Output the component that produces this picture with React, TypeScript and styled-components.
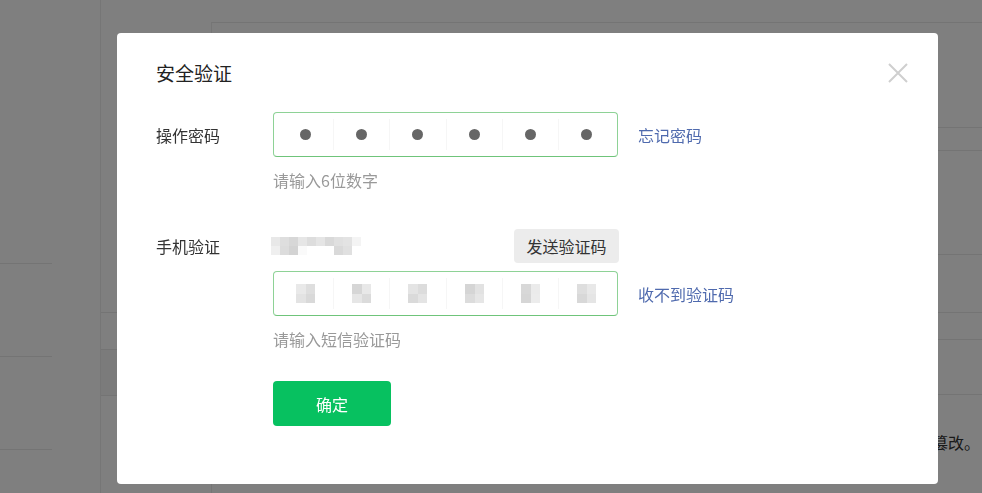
import React from "react";
import styled, { createGlobalStyle } from "styled-components";

const GlobalStyle = createGlobalStyle`
  html, body {
    margin: 0;
    padding: 0;
    height: 100%;
    overflow: hidden;
  }
  body {
    font-family: "Noto Sans CJK SC", "Noto Sans", "Liberation Sans", sans-serif;
    background: #fff;
  }
`;

const CODE_MOSAIC = [
  ["#e9e9e9", "#dedede", "#e3e3e3", "#d9d9d9"],
  ["#d6d6d6", "#e8e8e8", "#e6e6e6", "#dbdbdb"],
  ["#e4e4e4", "#dcdcdc", "#dadada", "#e4e4e4"],
  ["#d5d5d5", "#e2e2e2", "#dcdcdc", "#e6e6e6"],
  ["#d8d8d8", "#ebebeb", "#d6d6d6", "#ececec"],
  ["#dedede", "#e8e8e8", "#d8d8d8", "#e5e5e5"],
];

const PHONE_MOSAIC = [
  ["#e8e8e8", "#dedede", "#d7d7d7", "#e6e6e6", "#dddddd", "#e5e5e5", "#d9d9d9", "#e0e0e0", "#e3e3e3", "#f4f4f4"],
  ["#efefef", "#dcdcdc", "#d3d3d3", "#fafafa", "#ffffff", "#ffffff", "#ffffff", "#d9d9d9", "#e0e0e0", "#ffffff"],
];

const Page = styled.div`
  display: flex;
  height: 100vh;
  background: #fff;
`;

const SideNav = styled.div`
  width: 52px;
  padding-top: 171px;
  display: flex;
  flex-direction: column;
`;

const NavItem = styled.div`
  height: 92px;
  border-bottom: 1px solid #e8e8e8;
`;

const Gutter = styled.div`
  width: 48px;
`;

const SubColumn = styled.div`
  width: 110px;
  border-left: 1px solid #ececec;
  padding-top: 312px;
`;

const SubRow = styled.div<{ $h: number; $shade?: boolean }>`
  height: ${(p) => p.$h}px;
  border-top: 1px solid #e8e8e8;
  background: ${(p) => (p.$shade ? "#f6f6f6" : "transparent")};
`;

const Main = styled.div`
  flex: 1;
  margin-top: 22px;
  border-top: 1px solid #e8e8e8;
  border-left: 1px solid #ececec;
`;

const TableRow = styled.div<{ $h: number }>`
  height: ${(p) => p.$h}px;
  border-bottom: 1px solid #e8e8e8;
`;

const Notice = styled.div`
  margin-top: 36px;
  padding-right: 2px;
  text-align: right;
  font-size: 16px;
  line-height: 22px;
  color: #333;
`;

const Overlay = styled.div`
  position: fixed;
  inset: 0;
  background: rgba(0, 0, 0, 0.5);
  display: flex;
  align-items: flex-start;
  padding: 33px 0 0 117px;
`;

const Dialog = styled.div`
  width: 821px;
  height: 451px;
  box-sizing: border-box;
  background: #fff;
  border-radius: 4px;
  display: flex;
  flex-direction: column;
`;

const Header = styled.div`
  height: 79px;
  padding: 0 30px 0 39px;
  display: flex;
  align-items: center;
  justify-content: space-between;
`;

const Title = styled.h2`
  margin: 0;
  font-size: 19px;
  font-weight: 400;
  color: #222;
  line-height: 26px;
`;

const CloseButton = styled.button`
  border: 0;
  background: none;
  padding: 0;
  width: 20px;
  height: 20px;
  cursor: pointer;
  display: flex;
`;

const Body = styled.div`
  padding-left: 39px;
  display: flex;
  flex-direction: column;
`;

const FieldRow = styled.div<{ $top?: number }>`
  display: flex;
  align-items: center;
  margin-top: ${(p) => p.$top || 0}px;
`;

const Label = styled.div`
  width: 117px;
  font-size: 16px;
  line-height: 22px;
  color: #333;
`;

const CodeBox = styled.div`
  width: 345px;
  height: 45px;
  box-sizing: border-box;
  padding: 0 3px 0 4px;
  border: 1px solid #8ed296;
  border-bottom-color: #6fc47a;
  border-radius: 4px;
  display: flex;
  align-items: center;
`;

const Cell = styled.div<{ $faint?: boolean }>`
  flex: 1;
  height: 31px;
  display: flex;
  align-items: center;
  justify-content: center;
  & + & {
    border-left: 1px solid ${(p) => (p.$faint ? "#f6f6f6" : "#e8e8e8")};
  }
`;

const Dot = styled.span`
  width: 11px;
  height: 11px;
  border-radius: 50%;
  background: #666;
`;

const Link = styled.a`
  margin-left: 20px;
  font-size: 16px;
  line-height: 22px;
  color: #4f6aae;
  text-decoration: none;
  cursor: pointer;
`;

const Hint = styled.div`
  margin: 12px 0 0 117px;
  font-size: 16px;
  line-height: 22px;
  color: #999;
`;

const PhoneLine = styled.div`
  width: 346px;
  display: flex;
  align-items: center;
  justify-content: space-between;
`;

const SendButton = styled.button`
  width: 105px;
  height: 34px;
  border: 0;
  border-radius: 4px;
  background: #ececec;
  color: #333;
  font-family: inherit;
  font-size: 16px;
  padding: 0;
  cursor: pointer;
`;

const Mosaic = styled.svg`
  display: block;
  flex-shrink: 0;
`;

const ConfirmButton = styled.button`
  margin: 31px 0 0 117px;
  width: 118px;
  height: 45px;
  border: 0;
  border-radius: 4px;
  background: #07c160;
  color: #fff;
  font-family: inherit;
  font-size: 16px;
  cursor: pointer;
`;

const PhoneBlur = () => (
  <Mosaic width="90" height="18" viewBox="0 0 90 18" style={{ marginLeft: -2 }}>
    {PHONE_MOSAIC.map((row, r) =>
      row.map((c, i) => <rect key={`${r}-${i}`} x={i * 9} y={r * 9} width="9" height="9" fill={c} />)
    )}
  </Mosaic>
);

const CodeBlur = ({ colors }: { colors: string[] }) => (
  <Mosaic width="19" height="19" viewBox="0 0 19 19">
    <rect x="0" y="0" width="10" height="10" fill={colors[0]} />
    <rect x="10" y="0" width="9" height="10" fill={colors[1]} />
    <rect x="0" y="10" width="10" height="9" fill={colors[2]} />
    <rect x="10" y="10" width="9" height="9" fill={colors[3]} />
  </Mosaic>
);

export default function App() {
  return (
    <>
      <GlobalStyle />
      <Page>
        <SideNav>
          <NavItem />
          <NavItem />
          <NavItem />
        </SideNav>
        <Gutter />
        <SubColumn>
          <SubRow $h={36} />
          <SubRow $h={45} $shade />
          <SubRow $h={60} />
        </SubColumn>
        <Main>
          <TableRow $h={104} />
          <TableRow $h={22} />
          <TableRow $h={103} />
          <TableRow $h={57} />
          <TableRow $h={26} />
          <TableRow $h={54} />
          <Notice>数据安全加密，防止信息被篡改。</Notice>
        </Main>
      </Page>

      <Overlay>
        <Dialog>
          <Header>
            <Title>安全验证</Title>
            <CloseButton aria-label="关闭">
              <svg width="20" height="20" viewBox="0 0 20 20">
                <path d="M1 1 L19 19 M19 1 L1 19" stroke="#cfcfcf" strokeWidth="2" fill="none" />
              </svg>
            </CloseButton>
          </Header>
          <Body>
            <FieldRow>
              <Label>操作密码</Label>
              <CodeBox>
                {[0, 1, 2, 3, 4, 5].map((i) => (
                  <Cell key={i}>
                    <Dot />
                  </Cell>
                ))}
              </CodeBox>
              <Link>忘记密码</Link>
            </FieldRow>
            <Hint>请输入6位数字</Hint>

            <FieldRow $top={38}>
              <Label>手机验证</Label>
              <PhoneLine>
                <PhoneBlur />
                <SendButton>发送验证码</SendButton>
              </PhoneLine>
            </FieldRow>
            <FieldRow $top={8}>
              <Label />
              <CodeBox>
                {CODE_MOSAIC.map((c, i) => (
                  <Cell key={i} $faint>
                    <CodeBlur colors={c} />
                  </Cell>
                ))}
              </CodeBox>
              <Link>收不到验证码</Link>
            </FieldRow>
            <Hint>请输入短信验证码</Hint>

            <ConfirmButton>确定</ConfirmButton>
          </Body>
        </Dialog>
      </Overlay>
    </>
  );
}
